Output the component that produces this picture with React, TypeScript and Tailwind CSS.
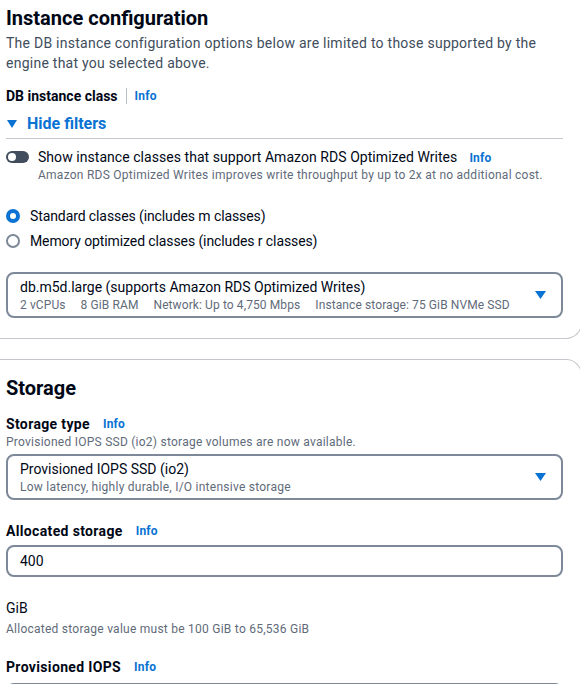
const font = { fontFamily: "Roboto, 'Liberation Sans', sans-serif" };

function Info() {
  return <span className="text-[12px] font-bold leading-[16px] tracking-[0.2px] text-[#0972d3]">Info</span>;
}

function Caret() {
  return (
    <svg width="11" height="8" viewBox="0 0 11 8" className="shrink-0">
      <path d="M0 0 H11 L5.5 8 Z" fill="#0972d3" />
    </svg>
  );
}

function SelectBox({ title, sub }: { title: string; sub: React.ReactNode }) {
  return (
    <div className="flex h-[46px] items-center justify-between rounded-lg border-2 border-[#7d8998] pl-[12px] pr-[15px]">
      <div>
        <div className="text-[14px] leading-[20px] text-[#000716]">{title}</div>
        <div className="text-[12px] leading-[16px] tracking-[0.25px] text-[#5f6b7a]">{sub}</div>
      </div>
      <Caret />
    </div>
  );
}

function Label({ text }: { text: string }) {
  return (
    <div className="flex items-center gap-[13px] text-[14px] leading-[20px]">
      <span className="font-bold tracking-[0.35px] text-[#000716]">{text}</span>
      <Info />
    </div>
  );
}

export default function App() {
  return (
    <div className="h-[684px] w-[580px] overflow-hidden bg-white" style={font}>
      <div className="w-[582px] rounded-br-2xl border-r border-b border-[#c6c6cd] pl-[6px] pb-[20px]">
        <div className="w-[557px]">
          <h2 className="pt-[6px] text-[20px] leading-[24px] font-bold text-[#000716]">Instance configuration</h2>
          <p className="mt-[3px] text-[14px] leading-[20px] tracking-[0.25px] text-[#414d5c]">
            The DB instance configuration options below are limited to those supported by the engine that you selected above.
          </p>
          <div className="mt-[13px] flex items-center text-[14px] leading-[20px]">
            <span className="font-bold text-[#000716]">DB instance class</span>
            <span className="mx-[8px] h-[16px] w-px bg-[#b6bec9]" />
            <Info />
          </div>
          <div className="mt-[7px] flex items-center gap-[10px] text-[16px] leading-[22px] font-bold text-[#0972d3]">
            <svg width="10" height="8" viewBox="0 0 10 8" className="ml-[1px]">
              <path d="M0 0 H10 L5 8 Z" fill="#0972d3" />
            </svg>
            Hide filters
          </div>
          <div className="mt-[3px] border-t border-[#c6c6cd]" />
          <div className="mt-[8px] flex gap-[9px]">
            <div className="mt-[4px] flex h-[12px] w-[23px] items-center rounded-full bg-[#414d5c] pl-[2px]">
              <div className="h-[8px] w-[8px] rounded-full bg-white" />
            </div>
            <div>
              <div className="flex items-center text-[14px] leading-[20px] tracking-[0.05px] text-[#000716]">
                Show instance classes that support Amazon RDS Optimized Writes
                <span className="ml-[12px]">
                  <Info />
                </span>
              </div>
              <div className="text-[12px] leading-[16px] tracking-[0.25px] text-[#5f6b7a]">
                Amazon RDS Optimized Writes improves write throughput by up to 2x at no additional cost.
              </div>
            </div>
          </div>
          <div className="mt-[23px] flex items-center gap-[10px] text-[14px] leading-[20px] tracking-[-0.1px] text-[#000716]">
            <span className="h-[14px] w-[14px] rounded-full border-[4px] border-[#0972d3] bg-white" />
            Standard classes (includes m classes)
          </div>
          <div className="mt-[5px] flex items-center gap-[10px] text-[14px] leading-[20px] tracking-[-0.1px] text-[#000716]">
            <span className="h-[14px] w-[14px] rounded-full border-2 border-[#7d8998] bg-white" />
            Memory optimized classes (includes r classes)
          </div>
          <div className="mt-[21px]">
            <SelectBox
              title="db.m5d.large (supports Amazon RDS Optimized Writes)"
              sub={
                <span className="flex gap-[15px] tracking-[0.1px]">
                  <span>2 vCPUs</span>
                  <span>8 GiB RAM</span>
                  <span>Network: Up to 4,750 Mbps</span>
                  <span>Instance storage: 75 GiB NVMe SSD</span>
                </span>
              }
            />
          </div>
        </div>
      </div>

      <div className="mt-[20px] w-[582px] rounded-tr-2xl border-t border-r border-[#c6c6cd] pl-[6px]">
        <div className="w-[557px]">
          <h2 className="pt-[16px] text-[20px] leading-[24px] font-bold text-[#000716]">Storage</h2>
          <div className="mt-[14px]">
            <Label text="Storage type" />
          </div>
          <div className="text-[12px] leading-[16px] tracking-[0.25px] text-[#5f6b7a]">
            Provisioned IOPS SSD (io2) storage volumes are now available.
          </div>
          <div className="mt-[4px]">
            <SelectBox title="Provisioned IOPS SSD (io2)" sub="Low latency, highly durable, I/O intensive storage" />
          </div>
          <div className="mt-[21px]">
            <Label text="Allocated storage" />
          </div>
          <div className="mt-[4px] flex h-[32px] items-center rounded-lg border-2 border-[#7d8998] pl-[12px] text-[14px] text-[#000716]">
            400
          </div>
          <div className="mt-[21px] text-[14px] leading-[20px] text-[#000716]">GiB</div>
          <div className="mt-[3px] text-[12px] leading-[16px] tracking-[0.25px] text-[#5f6b7a]">
            Allocated storage value must be 100 GiB to 65,536 GiB
          </div>
          <div className="mt-[20px]">
            <Label text="Provisioned IOPS" />
          </div>
          <div className="mt-[6px] h-[32px] rounded-lg border-2 border-[#7d8998]" />
        </div>
      </div>
    </div>
  );
}
